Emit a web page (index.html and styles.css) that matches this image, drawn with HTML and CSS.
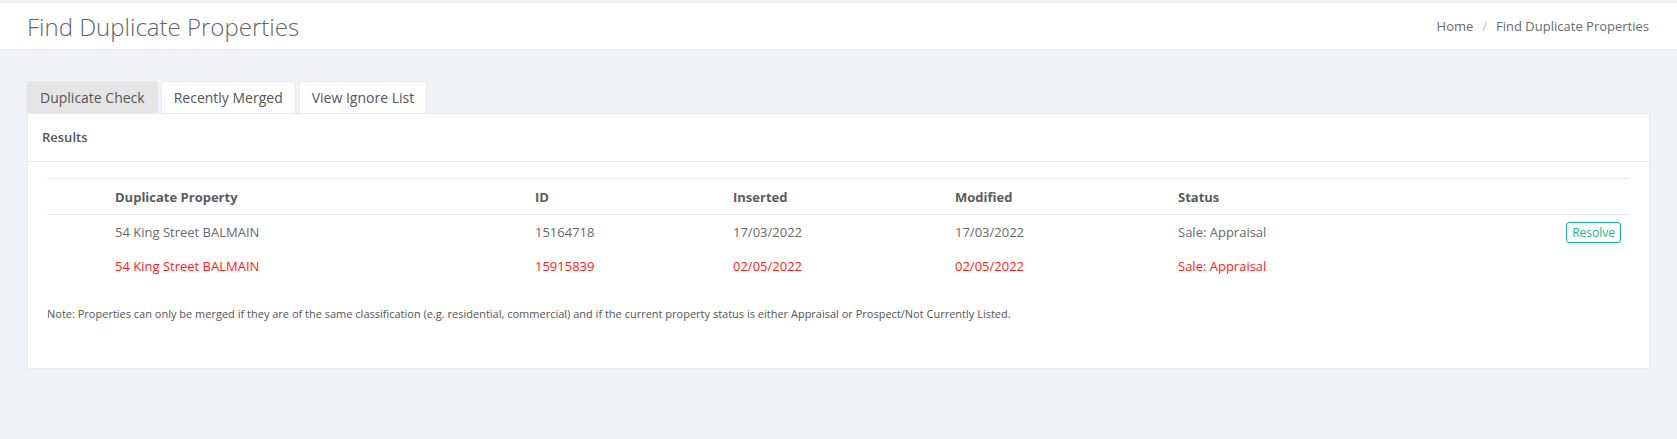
FILE: index.html
```html
<!DOCTYPE html>
<html lang="en">
<head>
    <meta charset="UTF-8">
    <meta name="viewport" content="width=device-width, initial-scale=1.0">
    <title>Find Duplicate Properties</title>
    <link rel="stylesheet" href="styles.css">
</head>
<body>

    <div class="page-heading">
        <h2>Find Duplicate Properties</h2>
        <ol class="breadcrumb">
            <li><a href="#">Home</a></li>
            <li class="sep">/</li>
            <li>Find Duplicate Properties</li>
        </ol>
    </div>

    <div class="wrapper">
        <ul class="tabs">
            <li class="tab active">Duplicate Check</li>
            <li class="tab">Recently Merged</li>
            <li class="tab">View Ignore List</li>
        </ul>

        <div class="panel">
            <div class="panel-heading">Results</div>
            <div class="panel-body">
                <table class="results">
                    <thead>
                        <tr>
                            <th class="col-check"></th>
                            <th class="col-address">Duplicate Property</th>
                            <th class="col-id">ID</th>
                            <th class="col-date">Inserted</th>
                            <th class="col-date2">Modified</th>
                            <th class="col-status">Status</th>
                            <th class="col-action"></th>
                        </tr>
                    </thead>
                    <tbody>
                        <tr>
                            <td></td>
                            <td>54 King Street BALMAIN</td>
                            <td>15164718</td>
                            <td>17/03/2022</td>
                            <td>17/03/2022</td>
                            <td>Sale: Appraisal</td>
                            <td class="col-action"><button class="btn-resolve">Resolve</button></td>
                        </tr>
                        <tr class="duplicate">
                            <td></td>
                            <td>54 King Street BALMAIN</td>
                            <td>15915839</td>
                            <td>02/05/2022</td>
                            <td>02/05/2022</td>
                            <td>Sale: Appraisal</td>
                            <td></td>
                        </tr>
                    </tbody>
                </table>

                <p class="note">Note: Properties can only be merged if they are of the same classification (e.g. residential, commercial) and if the current property status is either Appraisal or Prospect/Not Currently Listed.</p>
            </div>
        </div>
    </div>

</body>
</html>
```

FILE: styles.css
```css
body {
    font-family: "Open Sans", Arial, sans-serif;
    font-size: 13px;
    color: #676a6c;
    background-color: #f2f3f7;
    margin: 0;
    padding-top: 2px;
}

.page-heading {
    display: flex;
    justify-content: space-between;
    align-items: center;
    height: 46px;
    padding: 0 27px;
    background-color: white;
    border-top: 1px solid #e7eaec;
    border-bottom: 1px solid #e7eaec;
}

.page-heading h2 {
    margin: 0;
    font-size: 24px;
    font-weight: 300;
    color: #636567;
}

.breadcrumb {
    display: flex;
    list-style: none;
    margin: 0;
    padding: 0 1px 0 0;
    font-size: 13px;
}

.breadcrumb a {
    color: #676a6c;
    text-decoration: none;
}

.breadcrumb .sep {
    color: #c4c4c4;
    padding: 0 9px;
}

.wrapper {
    padding: 31px 27px;
}

.tabs {
    display: flex;
    gap: 3px;
    list-style: none;
    margin: 0;
    padding: 0;
}

.tab {
    height: 31px;
    line-height: 31px;
    padding: 0 12px;
    font-size: 14px;
    color: #555;
    background-color: white;
    border: 1px solid #e7eaec;
    border-bottom: none;
    border-radius: 4px 4px 0 0;
}

.tab.active {
    background-color: #e5e5e5;
    border-color: #e5e5e5;
}

.panel {
    height: 254px;
    background-color: white;
    border: 1px solid #e7eaec;
}

.panel-heading {
    height: 47px;
    line-height: 47px;
    padding: 0 14px;
    font-weight: 600;
    font-size: 13px;
    color: #555;
    border-bottom: 1px solid #e7eaec;
}

.panel-body {
    padding: 16px 20px 0 19px;
}

.results {
    width: 100%;
    border-collapse: collapse;
    table-layout: fixed;
    border-top: 1px solid #e7eaec;
}

.results th {
    height: 35px;
    padding: 0 8px;
    text-align: left;
    font-weight: 700;
    color: #5a5c5e;
    border-bottom: 1px solid #e7eaec;
}

.results td {
    height: 34px;
    padding: 0 8px;
    text-align: left;
}

.col-check { width: 44px; }
.col-address { width: 404px; }
.col-id { width: 182px; }
.col-date { width: 206px; }
.col-date2 { width: 207px; }
.col-status { width: 300px; }

.results .col-action {
    text-align: right;
}

.duplicate td {
    color: #ff1a1a;
}

.btn-resolve {
    font-family: "Open Sans", Arial, sans-serif;
    font-size: 12px;
    padding: 1px 5px;
    color: #1ab394;
    background-color: white;
    border: 1px solid #1ab394;
    border-radius: 3px;
    cursor: pointer;
}

.note {
    margin: 23px 0 0;
    font-size: 11px;
    color: #555;
}
```
